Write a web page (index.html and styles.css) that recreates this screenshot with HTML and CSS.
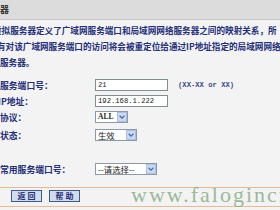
FILE: index.html
```html
<!DOCTYPE html>
<html>
<head>
<meta charset="utf-8">
<link rel="stylesheet" href="styles.css">
</head>
<body>
<div class="page">
  <div class="header"><span class="title">务器</span></div>
  <div class="desc">
    <div class="line l1">虚拟服务器定义了广域网服务端口和局域网网络服务器之间的映射关系，所</div>
    <div class="line l2">有对该广域网服务端口的访问将会被重定位给通过IP地址指定的局域网网络</div>
    <div class="line l3">服务器。</div>
  </div>
  <div class="form">
    <div class="row">
      <span class="label">服务端口号：</span>
      <span class="input">21</span>
      <span class="hint">(XX-XX or XX)</span>
    </div>
    <div class="row">
      <span class="label l-ip">IP地址：</span>
      <span class="input">192.168.1.222</span>
    </div>
    <div class="row">
      <span class="label">协议：</span>
      <span class="sel sel-all"><span class="sel-text latin">ALL</span><span class="sel-btn"><svg viewBox="0 0 10 10" width="8" height="8"><path d="M2 3.5 L5 6.5 L8 3.5" fill="none" stroke="#4b6aa5" stroke-width="1.6"/></svg></span></span>
    </div>
    <div class="row row-state">
      <span class="label">状态：</span>
      <span class="sel sel-state"><span class="sel-text">生效</span><span class="sel-btn"><svg viewBox="0 0 10 10" width="8" height="8"><path d="M2 3.5 L5 6.5 L8 3.5" fill="none" stroke="#4b6aa5" stroke-width="1.6"/></svg></span></span>
    </div>
    <div class="row row-common">
      <span class="label">常用服务端口号：</span>
      <span class="sel sel-choose"><span class="sel-text">--请选择--</span><span class="sel-btn"><svg viewBox="0 0 10 10" width="8" height="8"><path d="M2 3.5 L5 6.5 L8 3.5" fill="none" stroke="#4b6aa5" stroke-width="1.6"/></svg></span></span>
    </div>
  </div>
  <div class="divider"></div>
  <div class="buttons">
    <span class="btn">返 回</span>
    <span class="btn">帮 助</span>
  </div>
  <div class="divider"></div>
  <div class="watermark">www.falogincn.com</div>
</div>
</body>
</html>
```
FILE: styles.css
```css
html, body {
  margin: 0;
  padding: 0;
  background: #f3f3f3;
}
.page {
  position: relative;
  width: 280px;
  height: 210px;
  overflow: hidden;
  font-family: "Noto Sans CJK SC", "DejaVu Sans", sans-serif;
  color: #23307a;
}
.header {
  height: 19px;
  background: #dcdcdc;
  border-bottom: 1px solid #c4c4c4;
  display: flex;
  align-items: center;
}
.title {
  margin-left: -9px;
  font-size: 9px;
  font-weight: bold;
  color: #333;
}
.desc {
  margin-top: 2px;
  font-size: 8.6px;
  line-height: 16px;
  font-weight: bold;
  white-space: nowrap;
}
.l1 { margin-left: -7px; }
.l2 { margin-left: -3px; }
.l3 { margin-left: 0; }
.form {
  margin-top: 7px;
}
.row {
  height: 16px;
  display: flex;
  align-items: center;
}
.row-state { margin-top: 2px; }
.row-common { margin-top: 18px; }
.label {
  width: 95px;
  flex: none;
  font-size: 8.8px;
  font-weight: bold;
  white-space: nowrap;
}
.l-ip { margin-left: -2px; width: 97px; }
.input {
  box-sizing: border-box;
  width: 73px;
  height: 12px;
  border: 1px solid #7f8f8f;
  background: #fff;
  font-family: "Liberation Mono", monospace;
  font-size: 7.2px;
  line-height: 10px;
  padding-left: 2px;
  color: #222;
}
.hint {
  margin-left: 10px;
  font-family: "Liberation Mono", monospace;
  font-size: 7.2px;
  font-weight: bold;
  color: #3a4a8a;
}
.sel {
  box-sizing: border-box;
  height: 12px;
  border: 1px solid #8a9aa8;
  background: #fff;
  display: flex;
  align-items: center;
  justify-content: space-between;
  color: #222;
}
.sel-all { width: 33px; }
.sel-state { width: 42px; }
.sel-choose { width: 62px; }
.sel-text {
  padding-left: 2px;
  font-size: 8.4px;
  line-height: 10px;
  white-space: nowrap;
}
.latin {
  font-family: "Liberation Serif", serif;
  font-size: 7.5px;
  font-weight: bold;
}
.sel-btn {
  box-sizing: border-box;
  width: 10px;
  height: 10px;
  background: #c9d8f4;
  border: 1px solid #aebfe0;
  display: flex;
  align-items: center;
  justify-content: center;
}
.divider {
  margin-top: 10px;
  height: 1px;
  background: #e8b994;
}
.buttons {
  display: flex;
  gap: 7px;
  padding: 2px 0 0 11px;
  height: 13px;
}
.buttons + .divider { margin-top: 3px; }
.btn {
  box-sizing: border-box;
  width: 31px;
  height: 12px;
  background: #d3dcea;
  border: 1px solid #3d5a8a;
  font-size: 8px;
  font-weight: bold;
  line-height: 10px;
  text-align: center;
  color: #23307a;
}
.watermark {
  position: absolute;
  left: 131px;
  top: 182px;
  font-family: "Liberation Serif", serif;
  font-size: 22px;
  letter-spacing: 2px;
  color: rgba(110, 160, 110, 0.7);
  white-space: nowrap;
}
```
